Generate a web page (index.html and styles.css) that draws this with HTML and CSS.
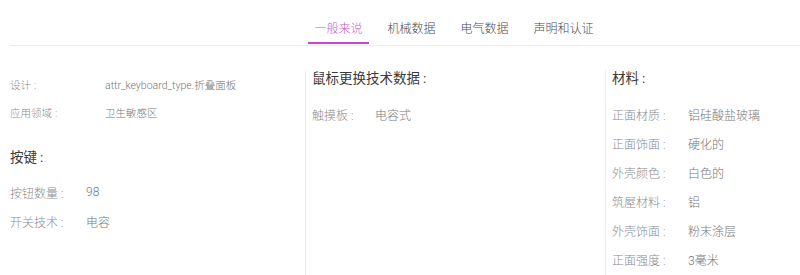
FILE: index.html
```html
<!DOCTYPE html>
<html lang="zh">
<head>
<meta charset="utf-8">
<title>规格</title>
<link rel="stylesheet" href="styles.css">
</head>
<body>
<nav class="tabs">
  <a class="tab active">一般来说</a>
  <a class="tab">机械数据</a>
  <a class="tab">电气数据</a>
  <a class="tab">声明和认证</a>
</nav>
<main class="specs">
  <section class="col col-first">
    <div class="row small"><span class="label wide">设计<span class="c">:</span></span><span class="value">attr_keyboard_type.折叠面板</span></div>
    <div class="row small"><span class="label wide">应用领域<span class="c">:</span></span><span class="value">卫生敏感区</span></div>
    <h3 class="heading spaced">按键<span class="c">:</span></h3>
    <div class="row"><span class="label">按钮数量<span class="c">:</span></span><span class="value">98</span></div>
    <div class="row"><span class="label">开关技术<span class="c">:</span></span><span class="value">电容</span></div>
  </section>
  <section class="col col-bordered">
    <h3 class="heading">鼠标更换技术数据<span class="c">:</span></h3>
    <div class="row"><span class="label narrow">触摸板<span class="c">:</span></span><span class="value">电容式</span></div>
  </section>
  <section class="col col-bordered">
    <h3 class="heading">材料<span class="c">:</span></h3>
    <div class="row"><span class="label">正面材质<span class="c">:</span></span><span class="value">铝硅酸盐玻璃</span></div>
    <div class="row"><span class="label">正面饰面<span class="c">:</span></span><span class="value">硬化的</span></div>
    <div class="row"><span class="label">外壳颜色<span class="c">:</span></span><span class="value">白色的</span></div>
    <div class="row"><span class="label">筑屋材料<span class="c">:</span></span><span class="value">铝</span></div>
    <div class="row"><span class="label">外壳饰面<span class="c">:</span></span><span class="value">粉末涂层</span></div>
    <div class="row"><span class="label">正面强度<span class="c">:</span></span><span class="value">3毫米</span></div>
  </section>
</main>
</body>
</html>
```

FILE: styles.css
```css
html, body {
  margin: 0;
  padding: 0;
  background: #ffffff;
  overflow: hidden;
}
body {
  font-family: "Roboto", "Noto Sans CJK SC", sans-serif;
  font-weight: 300;
  color: #777;
  width: 800px;
  height: 275px;
}
.tabs {
  display: flex;
  gap: 12px;
  margin-left: 10px;
  padding-left: 298px;
  padding-top: 19px;
  padding-bottom: 1px;
  border-bottom: 1px solid #ececec;
}
.tab {
  display: block;
  font-size: 12px;
  line-height: 20px;
  color: #4a4a4a;
  padding: 0 6.5px 3px;
  border-bottom: 2px solid transparent;
  text-decoration: none;
}
.tab.active {
  color: #c062c8;
  border-bottom-color: #c846cc;
}
.specs {
  display: grid;
  grid-template-columns: 295px 300px 1fr;
  margin-left: 10px;
  margin-top: 24px;
  height: 205px;
}
.col-bordered {
  border-left: 1px solid #ececec;
  padding-left: 6px;
}
.c {
  margin-left: 3px;
}
.heading {
  margin: 0 0 13.5px;
  font-size: 13.5px;
  font-weight: 400;
  line-height: 16px;
  color: #3a3a3a;
}
.heading.spaced {
  margin-top: 23px;
  margin-bottom: 12.5px;
}
.row {
  display: flex;
  height: 29px;
  align-items: center;
  font-size: 12px;
}
.row.small {
  height: 28px;
  font-size: 10.5px;
}
.label {
  width: 76px;
  flex: none;
  color: #8c8c8c;
}
.label.wide { width: 95px; }
.label.narrow { width: 63px; }
.value {
  color: #777;
}
```
